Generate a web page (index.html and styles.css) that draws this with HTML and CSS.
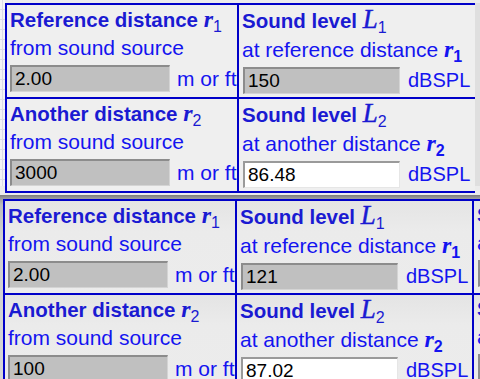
FILE: index.html
```html
<!DOCTYPE html>
<html>
<head>
<meta charset="utf-8">
<link rel="stylesheet" href="styles.css">
</head>
<body>
<div class="shot top">
  <div class="edge"></div>
  <div class="grid g2">
    <div class="cell">
      <div class="title">Reference distance <span class="rv">r</span><sub>1</sub></div>
      <div class="sub">from sound source</div>
      <div class="inrow"><input class="inp wl ro" value="2.00" readonly><span class="unit mft">m or ft</span></div>
    </div>
    <div class="cell">
      <div class="title">Sound level <span class="lv">L</span><sub>1</sub></div>
      <div class="sub">at reference distance <span class="rv">r</span><sub class="bs">1</sub></div>
      <div class="inrow"><input class="inp wr ro" value="150" readonly><span class="unit db">dBSPL</span></div>
    </div>
    <div class="cell">
      <div class="title">Another distance <span class="rv">r</span><sub>2</sub></div>
      <div class="sub">from sound source</div>
      <div class="inrow"><input class="inp wl ro" value="3000" readonly><span class="unit mft">m or ft</span></div>
    </div>
    <div class="cell">
      <div class="title">Sound level <span class="lv">L</span><sub>2</sub></div>
      <div class="sub">at another distance <span class="rv">r</span><sub class="bs">2</sub></div>
      <div class="inrow"><input class="inp wr res" value="86.48" readonly><span class="unit db">dBSPL</span></div>
    </div>
  </div>
  <div class="redge"></div>
</div>
<div class="shot bottom">
  <div class="grid g3">
    <div class="cell">
      <div class="title">Reference distance <span class="rv">r</span><sub>1</sub></div>
      <div class="sub">from sound source</div>
      <div class="inrow"><input class="inp wl ro" value="2.00" readonly><span class="unit mft">m or ft</span></div>
    </div>
    <div class="cell">
      <div class="title">Sound level <span class="lv">L</span><sub>1</sub></div>
      <div class="sub">at reference distance <span class="rv">r</span><sub class="bs">1</sub></div>
      <div class="inrow"><input class="inp wr ro" value="121" readonly><span class="unit db">dBSPL</span></div>
    </div>
    <div class="cell">
      <div class="title">Sound pressure</div>
      <div class="sub">at reference</div>
      <div class="inrow"><input class="inp wr ro" value="" readonly></div>
    </div>
    <div class="cell">
      <div class="title">Another distance <span class="rv">r</span><sub>2</sub></div>
      <div class="sub">from sound source</div>
      <div class="inrow"><input class="inp wl ro" value="100" readonly><span class="unit mft">m or ft</span></div>
    </div>
    <div class="cell">
      <div class="title">Sound level <span class="lv">L</span><sub>2</sub></div>
      <div class="sub">at another distance <span class="rv">r</span><sub class="bs">2</sub></div>
      <div class="inrow"><input class="inp wr res" value="87.02" readonly><span class="unit db">dBSPL</span></div>
    </div>
    <div class="cell">
      <div class="title">Sound pressure</div>
      <div class="sub">at another</div>
      <div class="inrow"><input class="inp wr ro" value="" readonly></div>
    </div>
  </div>
</div>
</body>
</html>
```
FILE: styles.css
```css
html, body {
  margin: 0;
  padding: 0;
}
body {
  width: 480px;
  height: 379px;
  overflow: hidden;
  font-family: "Liberation Sans", Arial, sans-serif;
  background: #e8e8e8;
}
.shot {
  box-sizing: border-box;
  overflow: hidden;
  width: 480px;
}
.top {
  display: flex;
  align-items: flex-start;
  height: 195px;
  padding-top: 3px;
  background: #ececec;
}
.edge {
  width: 5px;
  height: 186px;
  margin-top: -3px;
  flex: none;
  background-color: #f4f4f6;
  background-image:
    repeating-linear-gradient(to bottom, transparent 0 9px, #dcdce6 9px 10px),
    linear-gradient(to right, transparent 0 2px, #dcdce6 2px 3px, transparent 3px);
}
.redge {
  width: 5px;
  height: 183px;
  flex: none;
  background: #dfdfdf;
}
.bottom {
  height: 184px;
  padding-top: 4px;
  background: linear-gradient(to bottom, #7c7c7c 0, #9a9a9a 3px, #bdbdbd 10px, #cfcfcf 40px, #d6d6d6);
}
.grid {
  display: grid;
  flex: none;
  border-bottom: 2px solid #0000c8;
}
.g2 {
  grid-template-columns: 232px 238px;
}
.g3 {
  grid-template-columns: 232px 237px 120px;
  margin-left: 3px;
  width: 589px;
}
.cell {
  border-left: 2px solid #0000c8;
  border-top: 2px solid #0000c8;
  padding: 0 3px 3px 3px;
  background: #efefef;
  min-width: 0;
}
.bottom .cell {
  background: linear-gradient(to bottom, #e4e4e4, #ebebeb 30px, #ececec);
}
.title {
  font-weight: bold;
  font-size: 20.5px;
  line-height: 28px;
  color: #1a1ad2;
  white-space: nowrap;
}
.sub {
  font-size: 21px;
  line-height: 28px;
  color: #1414f0;
  white-space: nowrap;
}
.rv {
  font-family: "Liberation Serif", "Times New Roman", serif;
  font-style: italic;
  font-weight: bold;
  font-size: 24px;
}
.lv {
  font-family: "Liberation Serif", "Times New Roman", serif;
  font-style: italic;
  font-weight: normal;
  font-size: 27px;
  -webkit-text-stroke: 0.4px #1a1ad2;
}
sub {
  font-size: 16px;
  line-height: 0;
  vertical-align: -5px;
  font-weight: normal;
}
sub.bs {
  font-weight: bold;
}
.inrow {
  display: flex;
  align-items: center;
  height: 27px;
  margin-top: 3px;
}
.inp {
  box-sizing: border-box;
  height: 27px;
  margin: 0;
  padding: 0 0 0 3px;
  font-family: "Liberation Sans", Arial, sans-serif;
  font-size: 19px;
  color: #000;
  border-style: solid;
  border-width: 2px 1px 1px 2px;
  border-color: #8c8c8c #d4d4d4 #d4d4d4 #8c8c8c;
  outline: none;
  flex: none;
}
.ro {
  background: #c0c0c0;
}
.res {
  background: #ffffff;
  border-color: #9a9a9a #e6e6e6 #e6e6e6 #9a9a9a;
}
.wl {
  width: 160px;
}
.wr {
  width: 157px;
  margin-left: 1px;
}
.unit {
  color: #1414f0;
  white-space: nowrap;
  line-height: 27px;
}
.mft {
  font-size: 21px;
  margin-left: 7px;
}
.db {
  font-size: 20px;
  margin-left: 8px;
}
```
